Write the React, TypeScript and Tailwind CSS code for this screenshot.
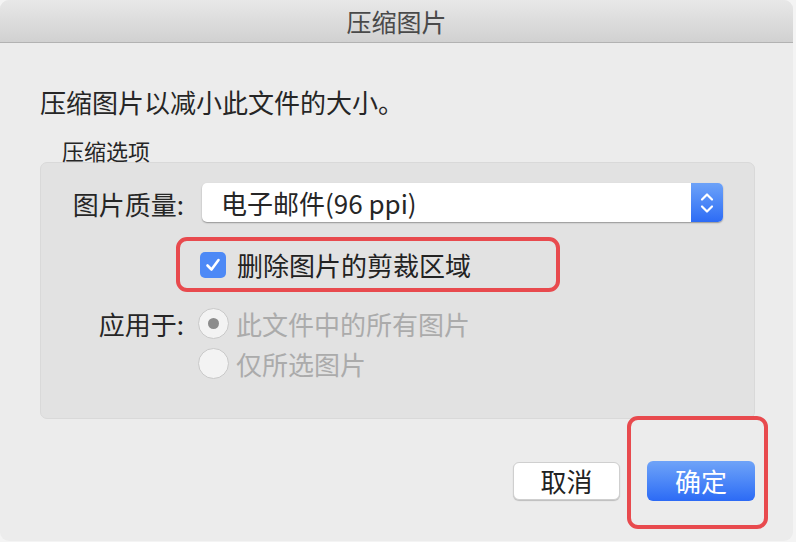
const font = { fontFamily: '"Noto Sans CJK SC", "Noto Sans", sans-serif' }

const Chevrons = () => (
    <svg width="14" height="26" viewBox="0 0 14 26" fill="none">
        <path d="M2 9.5 L7 4.5 L12 9.5" stroke="white" strokeWidth="2.2" strokeLinecap="round" strokeLinejoin="round" />
        <path d="M2 16.5 L7 21.5 L12 16.5" stroke="white" strokeWidth="2.2" strokeLinecap="round" strokeLinejoin="round" />
    </svg>
)

const Radio = ({ checked }: { checked?: boolean }) => (
    <div className="flex h-[31px] w-[31px] shrink-0 items-center justify-center rounded-full border border-[#c9c9c9] bg-[#f3f3f3]">
        {checked && <div className="h-[11px] w-[11px] rounded-full bg-[#8c8c8c]" />}
    </div>
)

const App = () => {
    return (
        <div className="h-[542px] w-[796px] bg-[#f4f4f4] text-[#262626]" style={font}>
            <div className="relative h-[541px] w-[793px] overflow-hidden rounded-[9px] bg-[#ececec]">
                <div className="flex h-[43px] items-center justify-center border-b border-[#b2b2b2] bg-gradient-to-b from-[#e8e8e8] to-[#d1d1d1]">
                    <span className="text-[25px] leading-none text-[#4a4a4a]">压缩图片</span>
                </div>

                <div className="px-[40px]">
                    <div className="mt-[45px] flex h-[28px] items-center text-[26px] leading-none">
                        压缩图片以减小此文件的大小。
                    </div>
                    <div className="mt-[23px] flex h-[22px] items-center pl-[22px] text-[22px] leading-none">
                        压缩选项
                    </div>

                    <div className="mt-[1px] h-[257px] w-[715px] rounded-[7px] border border-[#d9d9d9] bg-[#e2e2e2] pt-[20px]">
                        <div className="flex h-[39px] items-center">
                            <div className="w-[143px] pt-[2px] text-right text-[26px] leading-none">图片质量:</div>
                            <div className="ml-[18px] flex h-[39px] w-[521px] overflow-hidden rounded-[5px] bg-white shadow-[0_1px_1.5px_rgba(0,0,0,0.35)]">
                                <div className="flex flex-1 items-center pl-[19px] text-[26px] leading-none">电子邮件(96 ppi)</div>
                                <div className="flex w-[32px] items-center justify-center bg-gradient-to-b from-[#6da2f8] to-[#2d6bf5]">
                                    <Chevrons />
                                </div>
                            </div>
                        </div>

                        <div className="mt-[30px] flex h-[26px] items-center pl-[159px]">
                            <div className="flex h-[26px] w-[26px] items-center justify-center rounded-[5px] bg-[#4d89f6]">
                                <svg width="18" height="18" viewBox="0 0 18 18" fill="none">
                                    <path d="M3.5 9.5 L7.5 13.5 L14.5 4" stroke="white" strokeWidth="2.6" strokeLinecap="round" strokeLinejoin="round" />
                                </svg>
                            </div>
                            <span className="ml-[11px] text-[26px] leading-none text-[#222]">删除图片的剪裁区域</span>
                        </div>

                        <div className="mt-[30px] flex h-[31px] items-center">
                            <div className="w-[143px] text-right text-[26px] leading-none">应用于:</div>
                            <div className="ml-[14px]">
                                <Radio checked />
                            </div>
                            <span className="ml-[7px] text-[26px] leading-none text-[#ababab]">此文件中的所有图片</span>
                        </div>
                        <div className="mt-[9px] flex h-[31px] items-center pl-[157px]">
                            <Radio />
                            <span className="ml-[7px] text-[26px] leading-none text-[#ababab]">仅所选图片</span>
                        </div>
                    </div>

                    <div className="mt-[42px] flex items-center justify-end gap-[27px]">
                        <button className="flex h-[38px] w-[107px] items-center justify-center rounded-[6px] border border-[#cfcfcf] bg-white text-[26px] leading-none text-[#222] shadow-[0_1px_1px_rgba(0,0,0,0.2)]">
                            取消
                        </button>
                        <button className="-mr-[2px] flex h-[40px] w-[108px] items-center justify-center rounded-[6px] bg-gradient-to-b from-[#6fa3f8] to-[#2c6af5] text-[26px] leading-none text-white">
                            确定
                        </button>
                    </div>
                </div>

                <div className="absolute left-[176px] top-[237px] h-[55px] w-[384px] rounded-[11px] border-[4px] border-[#e84a4e]" />
                <div className="absolute left-[627px] top-[416px] h-[113px] w-[141px] rounded-[11px] border-[4px] border-[#e84a4e]" />
            </div>
        </div>
    )
}

export default App
